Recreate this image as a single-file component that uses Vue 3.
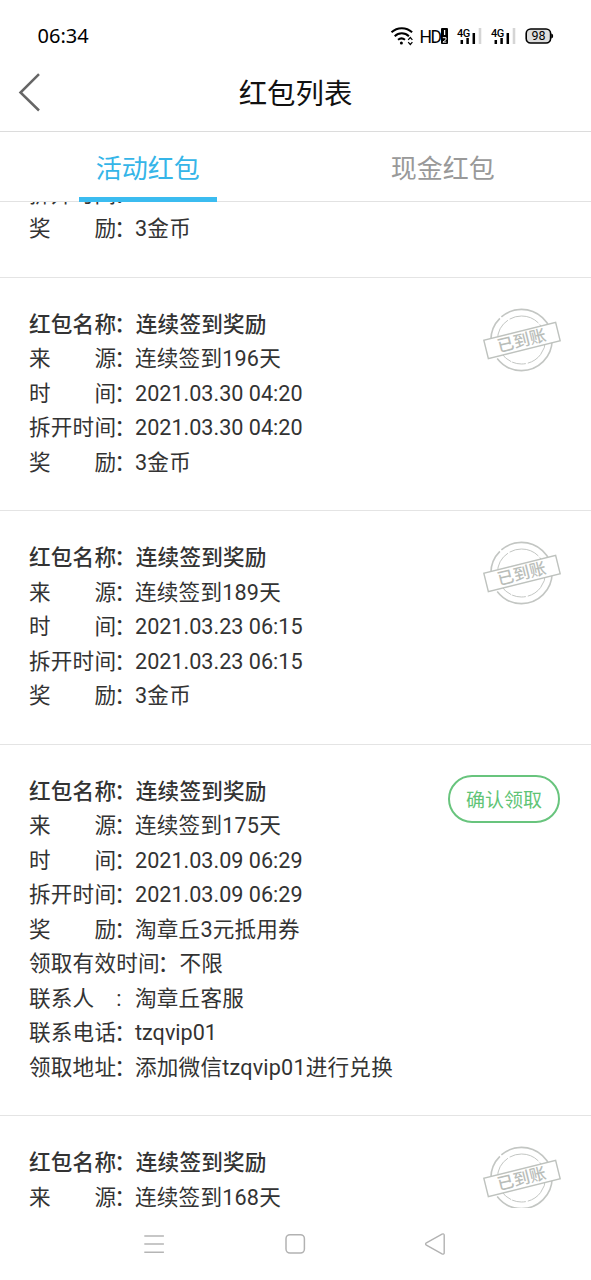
<script setup>
const name = { label: '红包名称', value: '连续签到奖励', title: true }
const signIn = (days, time) => [
  name,
  { label: '来　　源', value: `连续签到${days}天` },
  { label: '时　　间', value: time, latin: true },
  { label: '拆开时间', value: time, latin: true },
  { label: '奖　　励', value: '3金币' },
]
const items = [
  {
    rows: [
      { label: '拆开时间', value: '' },
      { label: '奖　　励', value: '3金币' },
    ],
  },
  { received: true, rows: signIn(196, '2021.03.30 04:20') },
  { received: true, rows: signIn(189, '2021.03.23 06:15') },
  {
    claimable: true,
    rows: [
      ...signIn(175, '2021.03.09 06:29').slice(0, 4),
      { label: '奖　　励', value: '淘章丘3元抵用券' },
      { label: '领取有效时间', value: '不限', wide: true },
      { label: '联系人　', colon: ':', value: '淘章丘客服' },
      { label: '联系电话', value: 'tzqvip01', latin: true },
      { label: '领取地址', value: '添加微信tzqvip01进行兑换' },
    ],
  },
  {
    received: true,
    rows: signIn(168, '').slice(0, 2),
  },
]
</script>

<template>
  <div class="screen">
    <div class="status">
      <span class="clock">06:34</span>
      <svg class="indicators" width="168" height="24" viewBox="388 24 168 24">
        <g fill="none" stroke="#000" stroke-width="2">
          <path d="M391.5 32.3a15 15 0 0 1 20.6 0" />
          <path d="M394.7 36.2a10.2 10.2 0 0 1 14.2 0" />
          <path d="M398 39.8a5.6 5.6 0 0 1 7 0" />
        </g>
        <circle cx="401.4" cy="43" r="1.5" />
        <path d="M408.2 39.8l2.1-2.3 2.1 2.3M408.2 42.2l2.1 2.3 2.1-2.3" fill="none" stroke="#000" stroke-width="1.2" />
        <text x="419.6" y="42.8" class="hd">HD</text>
        <rect x="441" y="28" width="7" height="16" rx="1" />
        <path d="M444.6 30v5" stroke="#fff" stroke-width="1.3" />
        <path d="M442.8 37.7h3.2v2l-3.1 2.4h3.4" fill="none" stroke="#fff" stroke-width="1" />
        <g v-for="x in [0, 34]" :key="x" :transform="`translate(${x} 0)`">
          <text x="457" y="36.6" class="net">4G</text>
          <path d="M461.8 40v4M467.6 38v6M473.8 33v11" stroke="#000" stroke-width="2.5" />
          <path d="M480 28v16" stroke="#d5d5d5" stroke-width="2.6" />
        </g>
        <rect x="526.2" y="29" width="24.4" height="14" rx="4.5" fill="#dedede" stroke="#000" stroke-width="1.6" />
        <path d="M551.2 33.5q2 .4 2 2.5t-2 2.5z" />
        <text x="538.5" y="40.3" text-anchor="middle" class="battery">98</text>
      </svg>
    </div>

    <header class="header">
      <svg class="back" width="26" height="42" viewBox="0 0 26 42">
        <path d="M23 3.2L4.5 21.5L23 39.5" fill="none" stroke="#666" stroke-width="2.5" />
      </svg>
      <h1>红包列表</h1>
    </header>

    <nav class="tabs">
      <div class="tab active"><span>活动红包</span></div>
      <div class="tab"><span>现金红包</span></div>
    </nav>

    <main class="viewport">
      <div class="list">
        <section v-for="(item, i) in items" :key="i" class="item">
          <div class="details">
            <div v-for="row in item.rows" :key="row.label" class="row" :class="{ title: row.title }">
              <span class="label" :class="{ wide: row.wide }">{{ row.label }}<span class="colon" :class="{ thin: row.colon }">{{ row.colon || '：' }}</span></span>
              <span class="value" :class="{ latin: row.latin }">{{ row.value }}</span>
            </div>
          </div>
          <svg v-if="item.received" class="stamp" width="80" height="68" viewBox="0 0 80 68">
            <g fill="none" stroke="#c3c6c3">
              <circle cx="39.5" cy="34" r="30.6" stroke-width="1.6" stroke-dasharray="76 3 41 2 68 3" />
              <circle cx="39.5" cy="34" r="24" stroke-width="1" stroke-dasharray="31 2 14 1 50 2" />
            </g>
            <g transform="translate(40 34.5) rotate(-14)">
              <rect x="-37" y="-9.4" width="74" height="18.8" fill="#fff" stroke="#bec2be" stroke-width="1.4" />
              <text x="-.5" y="5.9" text-anchor="middle" class="stamp-text">已到账</text>
            </g>
          </svg>
          <button v-else-if="item.claimable" class="claim">确认领取</button>
        </section>
      </div>
    </main>

    <footer class="system-nav">
      <svg width="22" height="24" viewBox="0 0 22 24"><path d="M1.3 3.9h19.6M1.3 12h19.6M1.3 20.2h19.6" stroke="#b5b5b5" stroke-width="1.5" /></svg>
      <svg width="22" height="24" viewBox="0 0 22 24"><rect x="2" y="2.7" width="18.4" height="18.4" rx="4" fill="none" stroke="#b2b2b2" stroke-width="1.5" /></svg>
      <svg width="22" height="24" viewBox="0 0 22 24"><path d="M2.4 10.8L18 2.1Q20.2 1.3 20.2 3.3V20.7Q20.2 22.7 18 21.8L2.4 13.2Q.8 12 2.4 10.8z" fill="none" stroke="#b2b2b2" stroke-width="1.4" /></svg>
    </footer>
  </div>
</template>

<style>
body {
  margin: 0;
  background: #fff;
}
</style>

<style scoped>
.screen {
  display: flex;
  flex-direction: column;
  width: 591px;
  height: 1280px;
  overflow: hidden;
  background: #fff;
  color: #333;
  font-family: Roboto, 'Noto Sans CJK SC', sans-serif;
}
.status {
  display: flex;
  flex: none;
  align-items: center;
  justify-content: space-between;
  box-sizing: border-box;
  height: 56px;
  padding: 16px 35px 0 37.5px;
}
.clock {
  color: #000;
  font: 20px/40px 'Noto Sans', sans-serif;
}
.hd {
  font: 400 17.5px Roboto, sans-serif;
  letter-spacing: -1.6px;
}
.net {
  font: 500 11px Roboto, sans-serif;
  letter-spacing: -0.6px;
}
.battery {
  font: 12.5px Roboto, sans-serif;
}
.header {
  display: grid;
  flex: none;
  grid-template-columns: 100px 1fr 100px;
  align-items: center;
  box-sizing: border-box;
  height: 76px;
  border-bottom: 1px solid #dcdcdc;
}
.back {
  margin-left: 15.5px;
  margin-top: -4px;
}
h1 {
  margin: 0;
  padding-top: 2px;
  color: #111;
  font-size: 28.4px;
  font-weight: 400;
  line-height: 42px;
  text-align: center;
}
.tabs {
  display: flex;
  flex: none;
  box-sizing: border-box;
  height: 70px;
  border-bottom: 1px solid #e2e2e2;
}
.tab {
  display: flex;
  flex: 1;
  justify-content: center;
  color: #999;
  font-size: 26px;
  line-height: 38px;
}
.tab span {
  box-sizing: border-box;
  width: 138px;
  height: 70px;
  padding-top: 18px;
  text-align: center;
}
.tab:last-child span {
  margin-right: 1px;
}
.tab.active {
  color: #35b5e8;
}
.tab.active span {
  border-bottom: 5px solid #3bbcf0;
}
.viewport {
  flex: none;
  height: 1006px;
  overflow: hidden;
}
.list {
  margin-top: -24.5px;
}
.item {
  display: flex;
  align-items: flex-start;
  justify-content: space-between;
  padding: 30px 31px 29.8px 29px;
  border-bottom: 1px solid #e4e4e4;
}
.item:first-child {
  padding-top: 0;
  padding-bottom: 30px;
}
.row {
  display: flex;
  height: 34.55px;
  font-size: 21.6px;
  line-height: 34.55px;
  white-space: pre;
}
.title {
  font-weight: 500;
}
.label {
  width: 106px;
  letter-spacing: 0.2px;
}
.label.wide {
  width: 150.5px;
}
.colon {
  position: relative;
  left: -2px;
  top: 0;
}
.colon.thin {
  left: 0;
}
.value {
  letter-spacing: 0.2px;
}
.value.latin {
  letter-spacing: 0;
}
.title .value {
  margin-left: 0.8px;
}
.stamp {
  margin: -2px -1.7px 0 0;
}
.stamp-text {
  fill: #b9bdb9;
  font: 500 16.5px 'Noto Sans CJK SC', sans-serif;
}
.claim {
  box-sizing: border-box;
  width: 112px;
  height: 48px;
  padding: 0;
  border: 2px solid #68c47d;
  border-radius: 24px;
  background: #fff;
  color: #5fc476;
  font-family: 'Noto Sans CJK SC', sans-serif;
  font-size: 19px;
  line-height: 44px;
}
.system-nav {
  display: flex;
  flex: 1;
  align-items: flex-start;
  justify-content: space-between;
  padding: 24px 145px 0 143px;
}
</style>
